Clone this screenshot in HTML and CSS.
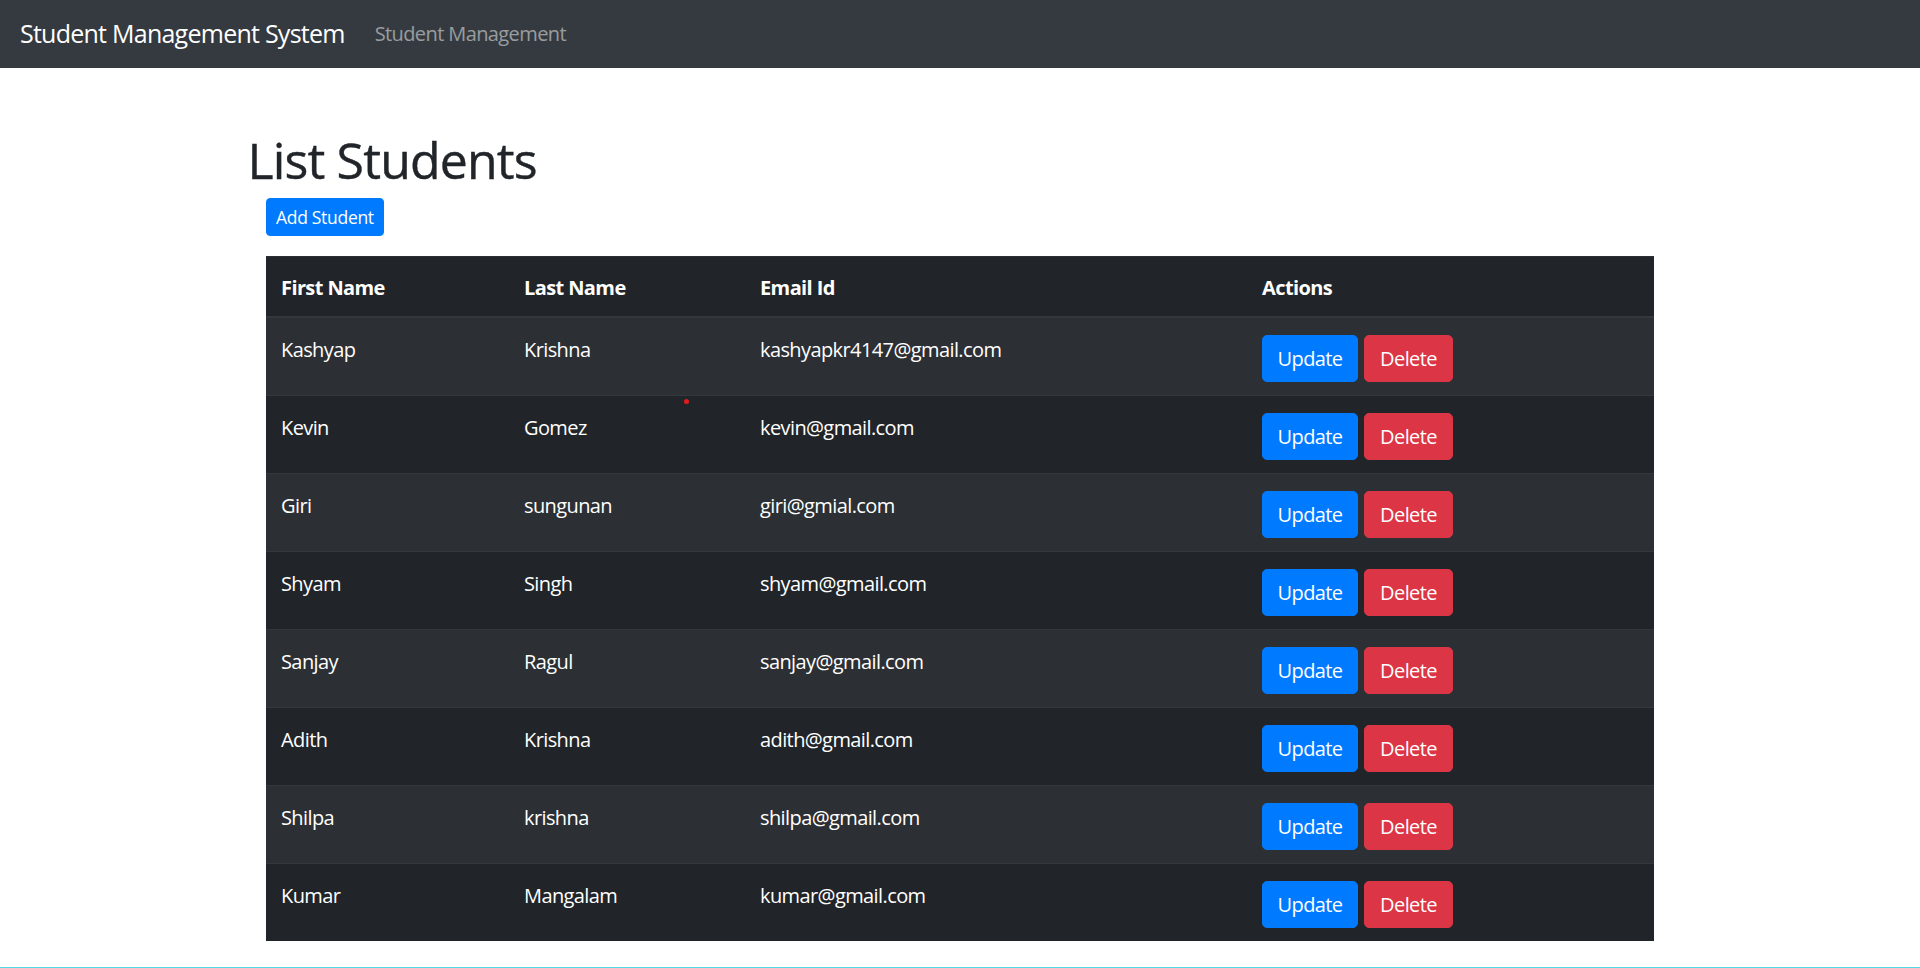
FILE: index.html
```html
<!DOCTYPE html>
<html lang="en">
<head>
<meta charset="utf-8">
<title>Student Management System</title>
<link rel="stylesheet" href="styles.css">
</head>
<body>
<header class="navbar">
  <a class="brand" href="#">Student Management System</a>
  <a class="nav-link" href="#">Student Management</a>
</header>
<main class="container">
  <h1 class="title">List Students</h1>
  <div class="content">
    <button class="btn btn-sm btn-primary">Add Student</button>
    <table class="table">
      <thead>
        <tr>
          <th class="c1">First Name</th>
          <th class="c2">Last Name</th>
          <th class="c3">Email Id</th>
          <th class="c4">Actions</th>
        </tr>
      </thead>
      <tbody>
        <tr><td>Kashyap</td><td>Krishna</td><td>kashyapkr4147@gmail.com</td><td><div class="actions"><button class="btn btn-primary">Update</button><button class="btn btn-danger">Delete</button></div></td></tr>
        <tr><td>Kevin</td><td>Gomez</td><td>kevin@gmail.com</td><td><div class="actions"><button class="btn btn-primary">Update</button><button class="btn btn-danger">Delete</button></div></td></tr>
        <tr><td>Giri</td><td>sungunan</td><td>giri@gmial.com</td><td><div class="actions"><button class="btn btn-primary">Update</button><button class="btn btn-danger">Delete</button></div></td></tr>
        <tr><td>Shyam</td><td>Singh</td><td>shyam@gmail.com</td><td><div class="actions"><button class="btn btn-primary">Update</button><button class="btn btn-danger">Delete</button></div></td></tr>
        <tr><td>Sanjay</td><td>Ragul</td><td>sanjay@gmail.com</td><td><div class="actions"><button class="btn btn-primary">Update</button><button class="btn btn-danger">Delete</button></div></td></tr>
        <tr><td>Adith</td><td>Krishna</td><td>adith@gmail.com</td><td><div class="actions"><button class="btn btn-primary">Update</button><button class="btn btn-danger">Delete</button></div></td></tr>
        <tr><td>Shilpa</td><td>krishna</td><td>shilpa@gmail.com</td><td><div class="actions"><button class="btn btn-primary">Update</button><button class="btn btn-danger">Delete</button></div></td></tr>
        <tr><td>Kumar</td><td>Mangalam</td><td>kumar@gmail.com</td><td><div class="actions"><button class="btn btn-primary">Update</button><button class="btn btn-danger">Delete</button></div></td></tr>
      </tbody>
    </table>
  </div>
</main>
<span class="cursor-dot"></span>
</body>
</html>
```
FILE: styles.css
```css
* { box-sizing: border-box; }
html { height: 100%; }
body {
  margin: 0;
  min-height: 100%;
  font-family: "Open Sans", "Noto Sans", sans-serif;
  font-size: 20px;
  line-height: 1.5;
  color: #212529;
  background: #fff;
  border-bottom: 1px solid #52d9e3;
  position: relative;
}
.navbar {
  height: 68px;
  background: #343a40;
  display: flex;
  align-items: center;
  padding: 0 20px;
}
.brand {
  font-size: 25px;
  color: #fff;
  text-decoration: none;
  margin-right: 20px;
  letter-spacing: -0.75px;
}
.nav-link {
  color: rgba(255,255,255,.5);
  text-decoration: none;
  padding: 0 10px;
  letter-spacing: -0.6px;
}
.container {
  width: 1425px;
  margin: 0 auto;
  padding-top: 62px;
}
.title {
  margin: 0 0 8px;
  font-size: 50px;
  line-height: 60px;
  font-weight: 500;
  letter-spacing: -0.85px;
  color: #212529;
  -webkit-text-stroke: 0.4px #212529;
}
.content {
  padding: 0 18.5px;
}
.btn {
  font-family: inherit;
  border: 1px solid transparent;
  color: #fff;
  font-size: 20px;
  line-height: 30px;
  height: 47px;
  padding: 0 14px;
  border-radius: 5px;
  cursor: pointer;
  letter-spacing: -0.6px;
}
.btn-sm {
  font-size: 17.5px;
  line-height: 26px;
  height: 38px;
  padding: 0 9px;
  border-radius: 4px;
  display: block;
  margin-bottom: 20px;
  letter-spacing: -0.3px;
}
.btn-primary { background: #007bff; border-color: #007bff; }
.btn-danger { background: #dc3545; border-color: #dc3545; }
.table {
  width: 1388px;
  border-collapse: collapse;
  background: #212529;
  color: #fff;
  table-layout: fixed;
}
.table th, .table td {
  padding: 15px;
  border-top: 1px solid #32383e;
  text-align: left;
  vertical-align: top;
  letter-spacing: -0.6px;
}
.table th {
  padding-top: 16px;
  padding-bottom: 14px;
  line-height: 29px;
  font-weight: 700;
  border-bottom: 2px solid #32383e;
  border-top-color: #2a2f34;
}
.table td {
  line-height: 30px;
  padding-top: 17px;
  padding-bottom: 13px;
}
.table tbody tr:nth-child(odd) { background: #2c3034; }
.c1 { width: 243px; }
.c2 { width: 236px; }
.c3 { width: 502px; }
.c4 { width: 407px; }
.actions { display: flex; gap: 6px; }
.actions .btn-primary { width: 96px; }
.actions .btn-danger { width: 89px; }
.cursor-dot {
  position: absolute;
  left: 684px;
  top: 399px;
  width: 5px;
  height: 5px;
  border-radius: 50%;
  background: #e41b1b;
}
```
